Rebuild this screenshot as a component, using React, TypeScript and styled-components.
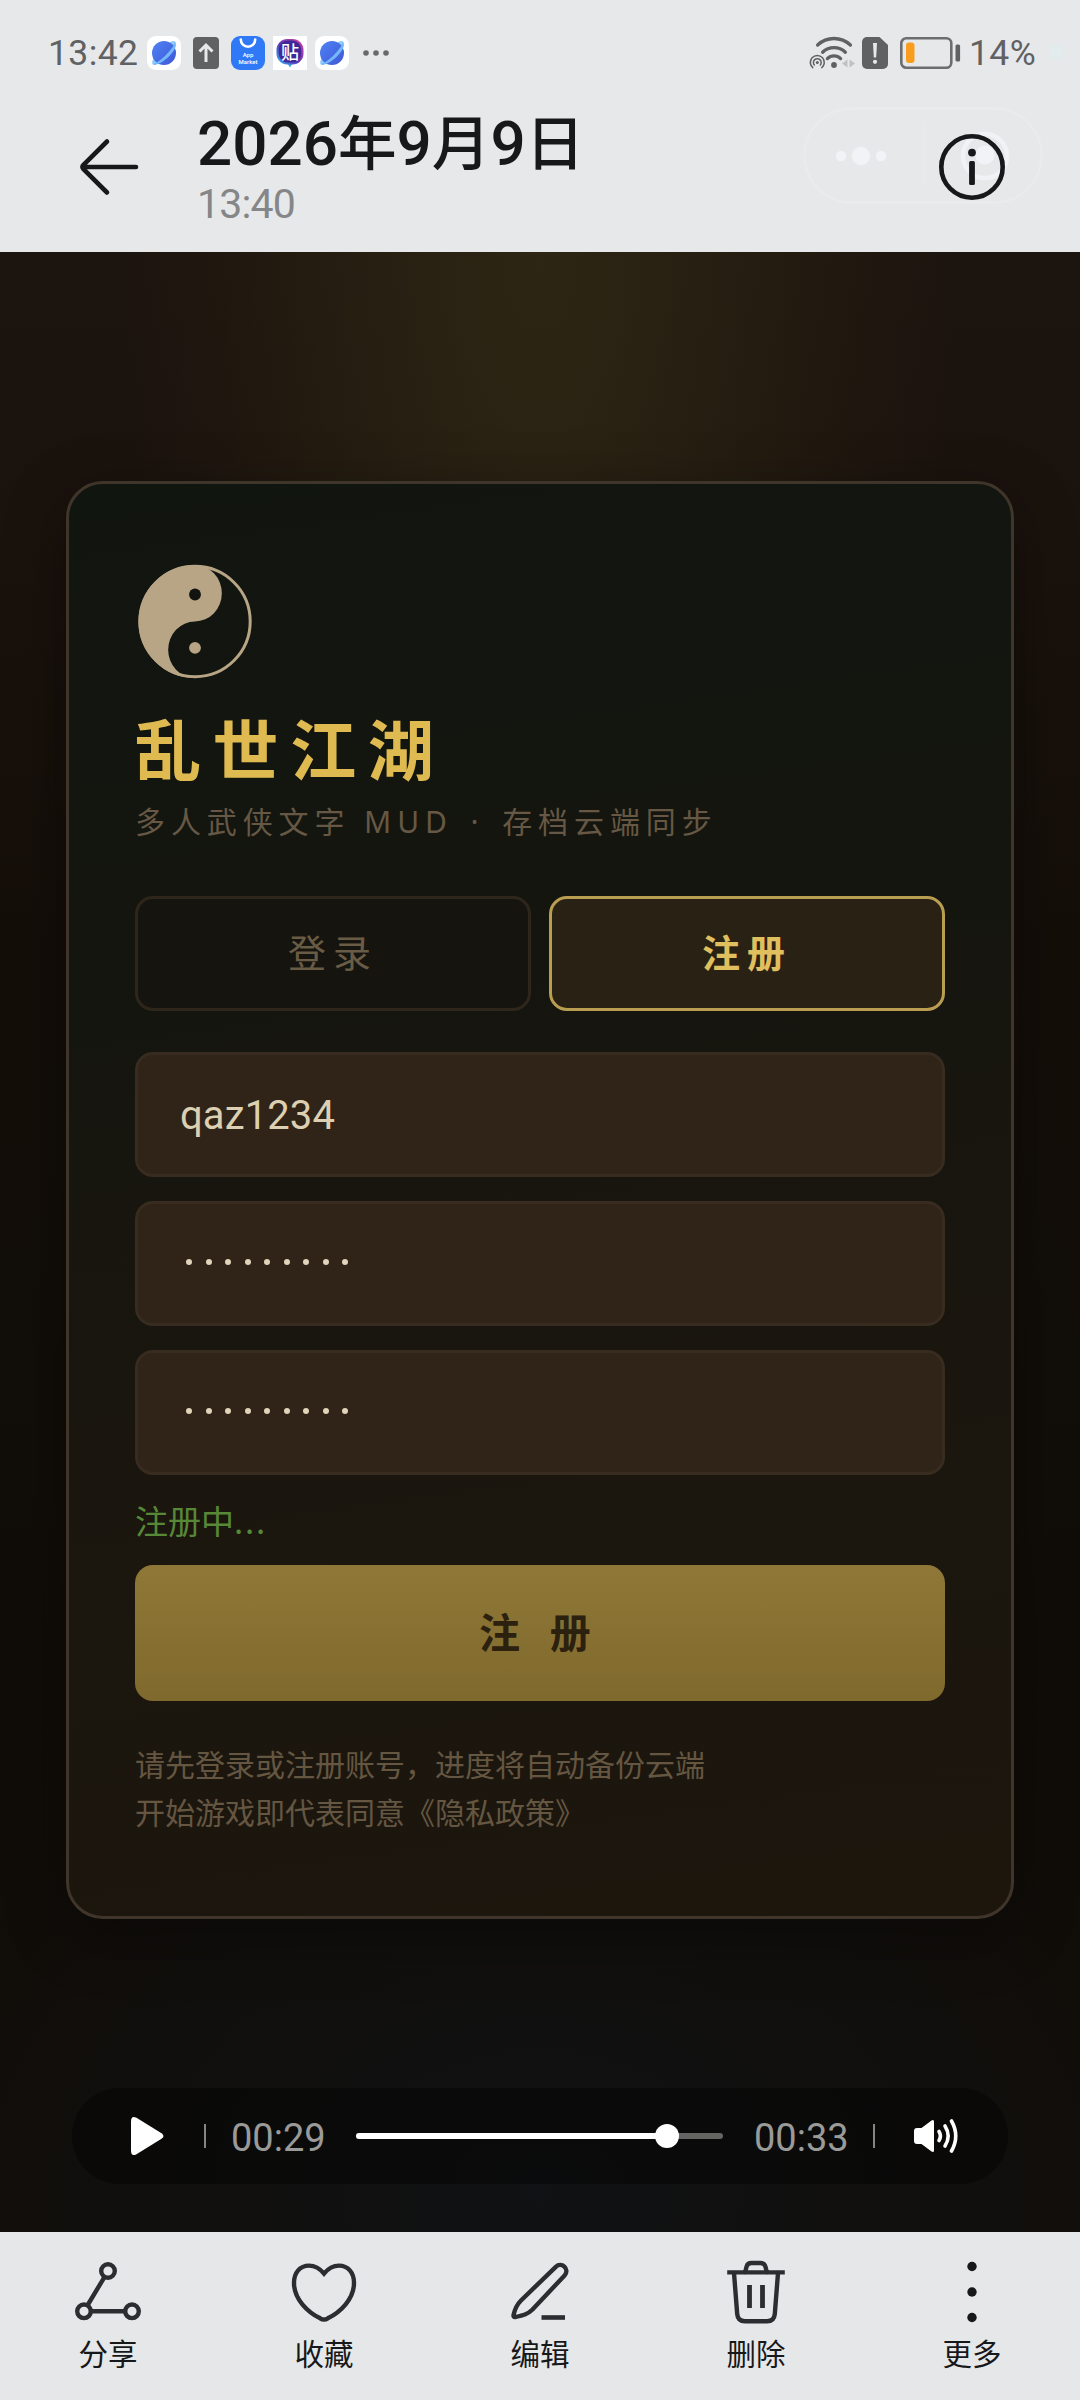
import React from "react";
import styled, { createGlobalStyle } from "styled-components";

const latin = `Roboto, "Noto Sans CJK SC", sans-serif`;
const cjk = `"Noto Sans CJK SC", sans-serif`;

const Global = createGlobalStyle`
  * { box-sizing: border-box; }
  html, body { margin: 0; padding: 0; }
  body { font-family: ${latin}; background: #e7e8ea; }
`;

const Screen = styled.div`
  width: 1080px;
  height: 2400px;
  display: flex;
  flex-direction: column;
  overflow: hidden;
`;

const Header = styled.header`
  position: relative;
  height: 252px;
  background: #e7e8ea;
  display: flex;
  flex-direction: column;
`;

const StatusBar = styled.div`
  height: 104px;
  padding: 0 17px 0 48px;
  display: flex;
  justify-content: space-between;
  align-items: center;
`;

const StatusGroup = styled.div`
  display: flex;
  align-items: center;
`;

const StatusText = styled.span<{ $w: number }>`
  width: ${(p) => p.$w}px;
  font: 400 35.5px/40px ${latin};
  letter-spacing: 0.4px;
  color: #606163;
  white-space: nowrap;
`;

const Slot = styled.span<{ $l?: number; $t?: number }>`
  display: flex;
  margin-left: ${(p) => p.$l ?? 0}px;
  margin-top: ${(p) => p.$t ?? 0}px;
`;

const PrivacyDot = styled.span`
  width: 14px;
  height: 14px;
  margin-left: 10px;
  border-radius: 50%;
  background: #e2ecec;
`;

const TitleBar = styled.div`
  height: 148px;
  padding: 0 72px 0 76px;
  display: flex;
`;

const BackButton = styled.div`
  width: 121px;
  padding-top: 32px;
`;

const TitleBlock = styled.div`
  flex: 1;
`;

const DateTitle = styled.h1`
  margin: 0;
  height: 72px;
  display: flex;
  align-items: baseline;
  font: 500 58.6px/72px ${cjk};
  color: #17181a;
`;

const Digits = styled.span`
  font: 500 62px/72px ${latin};
`;

const TimeSub = styled.div`
  margin-top: 4px;
  font: 400 41px/48px ${latin};
  letter-spacing: -0.8px;
  color: #858688;
`;

const InfoButton = styled.div`
  position: relative;
  padding-top: 27px;
`;

const GhostCapsule = styled.div`
  position: absolute;
  left: 803px;
  top: 107px;
  width: 240px;
  height: 97px;
  display: flex;
`;

const Stage = styled.main`
  height: 1980px;
  padding: 229px 66px 0;
  background:
    radial-gradient(ellipse 460px 1100px at 540px 0, rgba(48, 40, 20, 0.9), rgba(48, 40, 20, 0) 90%),
    radial-gradient(ellipse 700px 500px at 540px 1940px, rgba(16, 19, 23, 0.8), rgba(16, 19, 23, 0)),
    linear-gradient(180deg, #1c140e 0, #1a120d 260px, #140e09 700px, #100d08 1400px, #110d08 100%);
`;

const Card = styled.section`
  height: 1438px;
  padding: 80px 66px 0;
  border: 3px solid #40352a;
  border-radius: 37px;
  background: linear-gradient(172deg, #111510 0%, #15150f 35%, #1b160e 70%, #1c160d 100%);
  box-shadow: 0 16px 60px rgba(0, 0, 0, 0.38);
  display: flex;
  flex-direction: column;
`;

const GameTitle = styled.h2`
  margin: 22px 0 0;
  height: 80px;
  font: 700 66px/80px ${cjk};
  letter-spacing: 11.6px;
  color: #dfba50;
`;

const GameSub = styled.p`
  margin: 12px 0 0;
  height: 48px;
  font: 400 30px/48px "Noto Sans", ${cjk};
  letter-spacing: 5.9px;
  color: #665844;
  white-space: pre;
`;

const Bullet = styled.span`
  margin: 0 4px;
`;

const Tabs = styled.div`
  margin-top: 50px;
  display: flex;
  gap: 18px;
`;

const Tab = styled.div<{ $active?: boolean }>`
  flex: 1;
  height: 115px;
  padding-bottom: 5px;
  display: flex;
  align-items: center;
  justify-content: center;
  border: 3px solid ${(p) => (p.$active ? "#b99d51" : "#2e261b")};
  border-radius: 18px;
  background: ${(p) => (p.$active ? "#292214" : "#15140f")};
  color: ${(p) => (p.$active ? "#e0bf5e" : "#6a5b45")};
  font: ${(p) => (p.$active ? 700 : 400)} 38px/50px ${cjk};
  letter-spacing: 7px;
`;

const Fields = styled.div`
  margin-top: 41px;
  display: flex;
  flex-direction: column;
  gap: 24px;
`;

const Field = styled.div`
  height: 125px;
  padding: 0 42px;
  display: flex;
  align-items: center;
  border: 3px solid #372c1f;
  border-radius: 18px;
  background: #302317;
  color: #ddd0b2;
  font: 400 40px/48px ${latin};
`;

const FieldText = styled.span`
  padding-top: 3px;
  letter-spacing: 0.1px;
`;

const Mask = styled.div`
  display: flex;
  gap: 13.5px;
  margin: -4px 0 0 6px;
`;

const Dot = styled.i`
  width: 6px;
  height: 6px;
  border-radius: 50%;
  background: #e0d5ba;
`;

const Notice = styled.div`
  margin-top: 21px;
  height: 48px;
  font: 400 33px/48px ${cjk};
  color: #578838;
`;

const Ellipsis = styled.span`
  letter-spacing: 1.8px;
`;

const Submit = styled.div`
  margin-top: 21px;
  height: 136px;
  padding-bottom: 7px;
  display: flex;
  align-items: center;
  justify-content: center;
  border-radius: 18px;
  background: linear-gradient(180deg, #8f7837, #7f692c);
  color: #2c200f;
  font: 700 41px/56px ${cjk};
  letter-spacing: 10.3px;
  white-space: pre;
`;

const Legal = styled.div`
  margin-top: 38px;
  font: 400 30px/48px ${cjk};
  color: #655642;
`;

const Player = styled.div`
  margin: 169px 6px 0;
  height: 96px;
  padding: 0 48px 0 59px;
  display: flex;
  align-items: center;
  border-radius: 48px;
  background: rgba(4, 4, 4, 0.5);
`;

const Clock = styled.span<{ $l: number; $w: number }>`
  margin-left: ${(p) => p.$l}px;
  width: ${(p) => p.$w}px;
  padding-top: 3px;
  font: 400 38px/44px ${latin};
  color: #9a9a99;
`;

const Divider = styled.span<{ $l: number }>`
  margin-left: ${(p) => p.$l}px;
  width: 2px;
  height: 24px;
  background: #858584;
`;

const Track = styled.div`
  flex: 1;
  height: 6px;
  border-radius: 3px;
  background: #646463;
  display: flex;
  align-items: center;
`;

const Played = styled.div`
  width: 311px;
  height: 6px;
  border-radius: 3px;
  background: #fff;
`;

const Knob = styled.div`
  width: 24px;
  height: 24px;
  flex: none;
  margin-left: -12px;
  border-radius: 50%;
  background: #fff;
`;

const Toolbar = styled.nav`
  height: 168px;
  display: flex;
  background: #e6e7e9;
`;

const Action = styled.div`
  flex: 1;
  padding-top: 24px;
  display: flex;
  flex-direction: column;
  align-items: center;
  gap: 4px;
  font: 400 29.5px/40px ${cjk};
  color: #17181a;
`;

function PlanetIcon() {
  return (
    <svg width="34" height="34" viewBox="0 0 34 34">
      <defs>
        <linearGradient id="planet" x1="0" y1="0" x2="1" y2="1">
          <stop offset="0" stopColor="#4f83f5" />
          <stop offset="1" stopColor="#3f57d6" />
        </linearGradient>
      </defs>
      <rect width="34" height="34" rx="9" fill="#fff" />
      <ellipse cx="17" cy="17" rx="16" ry="5" transform="rotate(-45 17 17)" fill="#8ecbfb" />
      <circle cx="17" cy="17" r="12" fill="url(#planet)" />
      <path d="M6.2 28C13 26 25 14 28 6.4C30 9 28.4 12.6 25.4 16.4C21.4 21.4 15.6 26.4 10.8 28C8.5 28.8 7 29 6.2 28Z" fill="#74b8fa" />
    </svg>
  );
}

function UploadIcon() {
  return (
    <svg width="26" height="32" viewBox="0 0 26 32">
      <rect width="26" height="32" rx="4" fill="#606163" />
      <path d="M13 25V8M6.5 14.5L13 8L19.5 14.5" fill="none" stroke="#e7e8ea" strokeWidth="3" />
    </svg>
  );
}

function MarketIcon() {
  return (
    <svg width="34" height="34" viewBox="0 0 34 34">
      <rect width="34" height="34" rx="9" fill="#2f78f6" />
      <path d="M9.8 3.5A7.2 7.2 0 0 0 24.2 3.5" fill="none" stroke="#fff" strokeWidth="2.6" strokeLinecap="round" />
      <text x="17" y="21" textAnchor="middle" fontSize="6" fontWeight="500" fontFamily="Roboto, sans-serif" fill="#fff">App</text>
      <text x="17" y="28" textAnchor="middle" fontSize="6" fontWeight="500" fontFamily="Roboto, sans-serif" fill="#fff">Market</text>
    </svg>
  );
}

function ForumIcon() {
  return (
    <svg width="34" height="34" viewBox="0 0 34 34">
      <defs>
        <linearGradient id="forum" x1="0" y1="1" x2="1" y2="0">
          <stop offset="0" stopColor="#35b8f5" />
          <stop offset="0.45" stopColor="#5a35b8" />
          <stop offset="1" stopColor="#d8459a" />
        </linearGradient>
      </defs>
      <rect width="34" height="34" fill="#fff" />
      <path d="M13.5 26H20.5L17 31.5Z" fill="#35a8f0" />
      <rect x="3.5" y="3" width="27" height="25.5" rx="11" fill="url(#forum)" />
      <rect x="5.8" y="4.6" width="22.4" height="22" rx="9" fill="#40289a" />
      <text x="17" y="22.5" textAnchor="middle" fontSize="18" fontWeight="500" fontFamily="'Noto Sans CJK SC', sans-serif" fill="#fff">贴</text>
    </svg>
  );
}

function MoreDots() {
  return (
    <svg width="27" height="8" viewBox="0 0 27 8" fill="#68696b">
      <circle cx="3" cy="4" r="2.8" />
      <circle cx="13" cy="4" r="2.8" />
      <circle cx="23" cy="4" r="2.8" />
    </svg>
  );
}

function WifiIcon() {
  return (
    <svg width="48" height="36" viewBox="0 0 48 36" fill="none" stroke="#606163">
      <g strokeWidth="3.3" strokeLinecap="round">
        <path d="M8.6 10A24 24 0 0 1 41.4 10" />
        <path d="M13.6 17.2A16.5 16.5 0 0 1 36.4 17.2" />
        <path d="M18.4 23.6A9.3 9.3 0 0 1 31.6 23.6" />
      </g>
      <circle cx="25" cy="30" r="2.9" fill="#606163" stroke="none" />
      <g strokeWidth="1.5">
        <path d="M4.2 33.1A7 7 0 1 1 12.4 33.1" />
        <path d="M5.7 30.5A3.9 3.9 0 1 1 10.9 30.5" />
      </g>
      <circle cx="8.3" cy="27.5" r="1.5" fill="#606163" stroke="none" />
      <path d="M38.5 24.5V32.5L33 28.5ZM40.5 24.5V32.5L46 28.5Z" fill="#c0c1c3" stroke="none" />
    </svg>
  );
}

function AlertIcon() {
  return (
    <svg width="26" height="32" viewBox="0 0 26 32">
      <path d="M5 0H17.5L26 8V27A5 5 0 0 1 21 32H5A5 5 0 0 1 0 27V5A5 5 0 0 1 5 0Z" fill="#606163" />
      <path d="M11 6H15L14.2 20.5H11.8Z" fill="#e7e8ea" />
      <circle cx="13" cy="24.8" r="2.1" fill="#e7e8ea" />
    </svg>
  );
}

function BatteryIcon() {
  return (
    <svg width="61" height="32" viewBox="0 0 61 32">
      <rect x="1.3" y="1.3" width="50" height="29.4" rx="5" fill="none" stroke="#6c6d6f" strokeWidth="2.6" />
      <rect x="6" y="5.5" width="8.5" height="20.5" rx="3" fill="#fb9d1c" />
      <rect x="55.5" y="7.5" width="4.6" height="17" rx="1.5" fill="#606163" />
    </svg>
  );
}

function CapsuleArt() {
  return (
    <svg width="240" height="97" viewBox="0 0 240 97" fill="none">
      <rect x="1.5" y="1.5" width="237" height="94" rx="47" stroke="#eaebed" strokeWidth="2.4" />
      <path d="M121 19V78" stroke="#e9eaec" strokeWidth="3" />
      <g fill="#f2f3f6">
        <circle cx="38" cy="49" r="5.2" />
        <circle cx="58" cy="49" r="9.2" />
        <circle cx="78" cy="49" r="5.2" />
        <circle cx="182" cy="48" r="9.5" />
      </g>
      <circle cx="182" cy="49" r="22" stroke="#f1f2f5" strokeWidth="4.5" />
    </svg>
  );
}

function YinYang() {
  return (
    <svg width="120" height="120" viewBox="0 0 120 120">
      <circle cx="60" cy="57.5" r="55.2" fill="none" stroke="#b7a585" strokeWidth="3" />
      <path d="M60 1A56.5 56.5 0 0 0 60 114A26.6 28 0 0 1 60 57.5A26.6 28 0 0 0 60 1Z" fill="#b7a585" />
      <circle cx="60" cy="30.5" r="5.9" fill="#12140f" />
      <circle cx="60" cy="83.8" r="5.9" fill="#b7a585" />
    </svg>
  );
}

const stroke = { fill: "none", stroke: "#2c2d30", strokeWidth: 4.4, strokeLinecap: "round" as const, strokeLinejoin: "round" as const };

const actions = [
  {
    label: "分享",
    icon: (
      <g {...stroke}>
        <circle cx="36" cy="15" r="6.8" />
        <circle cx="12" cy="55.3" r="6.8" />
        <circle cx="60" cy="55.3" r="6.8" />
        <path d="M32.3 21.3L15.7 49M19 55.3H53" />
      </g>
    ),
  },
  {
    label: "收藏",
    icon: (
      <path {...stroke} strokeLinejoin="miter" d="M36 17.6C31.5 12 26.5 9.6 21 9.6C12 9.6 6 16.5 6 27C6 43 19.5 56 32.2 62.3Q36 64.8 39.8 62.3C52.5 56 66 43 66 27C66 16.5 60 9.6 51 9.6C45.5 9.6 40.5 12 36 17.6Z" />
    ),
  },
  {
    label: "编辑",
    icon: (
      <g {...stroke}>
        <path d="M51.8 10.8C57.5 5.4 65.8 13 60.8 19.2L28.5 53.5C23.5 58.5 18.5 59.5 11.5 61Q9 61.4 9.6 58.8C11 52.5 12.5 49 17 44.5Z" />
        <path d="M37.5 61.5H61" strokeLinecap="butt" strokeWidth="4.6" />
      </g>
    ),
  },
  {
    label: "删除",
    icon: (
      <g {...stroke}>
        <path d="M7.2 16.4H64.8" strokeLinecap="butt" />
        <path d="M25.2 16L26.6 10.5Q27.6 7 31.5 7H40.5Q44.4 7 45.4 10.5L46.8 16" />
        <path d="M14 17L17.2 58Q17.8 65.2 25 65.2H47Q54.2 65.2 54.8 58L58 17" />
        <path d="M29.5 29V52M42.5 29V52" strokeLinecap="butt" strokeWidth="4.8" />
      </g>
    ),
  },
  {
    label: "更多",
    icon: (
      <g fill="#17181a">
        <circle cx="36" cy="10.5" r="4.7" />
        <circle cx="36" cy="36" r="4.7" />
        <circle cx="36" cy="61.5" r="4.7" />
      </g>
    ),
  },
];

function PasswordMask() {
  return (
    <Mask>
      {Array.from({ length: 9 }, (_, i) => (
        <Dot key={i} />
      ))}
    </Mask>
  );
}

export default function App() {
  return (
    <Screen>
      <Global />
      <Header>
        <StatusBar>
          <StatusGroup>
            <Slot $t={2}><StatusText $w={99}>13:42</StatusText></Slot>
            <Slot $t={2}><PlanetIcon /></Slot>
            <Slot $l={12} $t={2}><UploadIcon /></Slot>
            <Slot $l={12} $t={2}><MarketIcon /></Slot>
            <Slot $l={8} $t={2}><ForumIcon /></Slot>
            <Slot $l={8} $t={2}><PlanetIcon /></Slot>
            <Slot $l={14} $t={1}><MoreDots /></Slot>
          </StatusGroup>
          <StatusGroup>
            <Slot $t={2}><WifiIcon /></Slot>
            <Slot $l={5} $t={1}><AlertIcon /></Slot>
            <Slot $l={12} $t={1}><BatteryIcon /></Slot>
            <Slot $l={8} $t={2}><StatusText $w={70}>14%</StatusText></Slot>
            <PrivacyDot />
          </StatusGroup>
        </StatusBar>
        <GhostCapsule><CapsuleArt /></GhostCapsule>
        <TitleBar>
          <BackButton>
            <svg width="66" height="62" viewBox="0 0 66 62" fill="none" stroke="#17181a" strokeWidth="4.6" strokeLinecap="round" strokeLinejoin="round">
              <path d="M60 31H6.5M31 5.5L7.5 28.8Q5.5 31 7.5 33.2L31 56.5" />
            </svg>
          </BackButton>
          <TitleBlock>
            <DateTitle>
              <Digits>2026</Digits>年<Digits>9</Digits>月<Digits>9</Digits>日
            </DateTitle>
            <TimeSub>13:40</TimeSub>
          </TitleBlock>
          <InfoButton>
            <svg width="72" height="72" viewBox="0 0 72 72">
              <circle cx="36" cy="36" r="30.7" fill="none" stroke="#17181a" strokeWidth="4.6" />
              <circle cx="36" cy="21.6" r="3.9" fill="#17181a" />
              <rect x="33.1" y="30" width="5.8" height="24" rx="1.5" fill="#17181a" />
            </svg>
          </InfoButton>
        </TitleBar>
      </Header>

      <Stage>
        <Card>
          <YinYang />
          <GameTitle>乱世江湖</GameTitle>
          <GameSub>多人武侠文字 MUD <Bullet>·</Bullet> 存档云端同步</GameSub>
          <Tabs>
            <Tab>登录</Tab>
            <Tab $active>注册</Tab>
          </Tabs>
          <Fields>
            <Field><FieldText>qaz1234</FieldText></Field>
            <Field><PasswordMask /></Field>
            <Field><PasswordMask /></Field>
          </Fields>
          <Notice>注册中<Ellipsis>...</Ellipsis></Notice>
          <Submit>注 册</Submit>
          <Legal>
            <div>请先登录或注册账号，进度将自动备份云端</div>
            <div>开始游戏即代表同意《隐私政策》</div>
          </Legal>
        </Card>
        <Player>
          <svg width="34" height="40" viewBox="0 0 34 40">
            <path d="M0 5.5Q0 -1 5.5 1.8L30.5 17.2Q34.5 20 30.5 22.8L5.5 38.2Q0 41 0 34.5Z" fill="#fff" />
          </svg>
          <Divider $l={39} />
          <Clock $l={25} $w={125}>00:29</Clock>
          <Track>
            <Played />
            <Knob />
          </Track>
          <Clock $l={31} $w={97}>00:33</Clock>
          <Divider $l={22} />
          <Slot $l={39}>
            <svg width="46" height="38" viewBox="0 0 46 38">
              <path d="M0 14Q0 11 3 11H7.5L17.5 3.4Q20 2 20 4.6V33.4Q20 36 17.5 34.6L7.5 27H3Q0 27 0 24Z" fill="#fff" />
              <g fill="none" stroke="#fff" strokeWidth="3.6" strokeLinecap="round">
                <path d="M25 14.5Q27.8 19 25 23.5" />
                <path d="M31 9Q37.4 19 31 29" />
                <path d="M37.5 4Q46 19 37.5 34" />
              </g>
            </svg>
          </Slot>
        </Player>
      </Stage>

      <Toolbar>
        {actions.map((a) => (
          <Action key={a.label}>
            <svg width="72" height="72" viewBox="0 0 72 72">{a.icon}</svg>
            <span>{a.label}</span>
          </Action>
        ))}
      </Toolbar>
    </Screen>
  );
}
